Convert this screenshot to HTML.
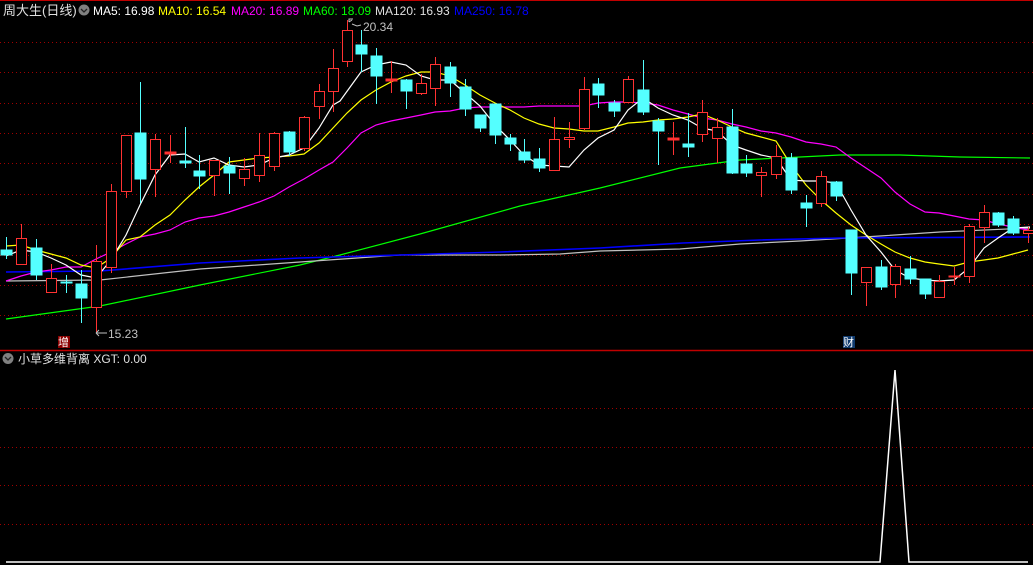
<!DOCTYPE html>
<html><head><meta charset="utf-8">
<style>
html,body{margin:0;padding:0;background:#000;width:1033px;height:565px;overflow:hidden}
svg{display:block}
text{font-family:"Liberation Sans","Noto Sans CJK SC",sans-serif;font-size:12px}
</style></head><body>
<svg width="1033" height="565" viewBox="0 0 1033 565" xmlns="http://www.w3.org/2000/svg">
<rect width="1033" height="565" fill="#000"/>
<line x1="0" y1="0.5" x2="1033" y2="0.5" stroke="#c00000" stroke-width="1"/>
<g stroke="#a00000" stroke-width="1" stroke-dasharray="1,3" shape-rendering="crispEdges">
<line x1="0" x2="1033" y1="42.5" y2="42.5"/><line x1="0" x2="1033" y1="72.5" y2="72.5"/>
<line x1="0" x2="1033" y1="103.5" y2="103.5"/><line x1="0" x2="1033" y1="133.5" y2="133.5"/>
<line x1="0" x2="1033" y1="163.5" y2="163.5"/><line x1="0" x2="1033" y1="194.5" y2="194.5"/>
<line x1="0" x2="1033" y1="224.5" y2="224.5"/><line x1="0" x2="1033" y1="255.5" y2="255.5"/>
<line x1="0" x2="1033" y1="285.5" y2="285.5"/><line x1="0" x2="1033" y1="315.5" y2="315.5"/>
<line x1="0" x2="1033" y1="408.5" y2="408.5"/><line x1="0" x2="1033" y1="447.5" y2="447.5"/>
<line x1="0" x2="1033" y1="485.5" y2="485.5"/><line x1="0" x2="1033" y1="524.5" y2="524.5"/>
</g>
<!-- MA lines -->
<g fill="none" stroke-width="1.2">
<polyline stroke="#00ff00" points="6,319 100,306 200,285 300,265 340,255 420,234 520,206 600,188 680,168 740,160 800,157 840,155 900,155 960,157 1030,158"/>
<polyline stroke="#c0c0c0" points="6,281 100,280 200,269 300,262 400,255 500,255 560,254 600,251 680,249 740,244 800,241 880,236 940,232 1030,228"/>
<polyline stroke="#0000ff" stroke-width="1.6" points="6,272 100,271 200,263 300,258 400,255 500,252 600,248 683,243 760,240 840,238 1030,237"/>
<polyline stroke="#ff00ff" points="6,281 21,276 36,272 51,270 66,267 81,267 96,259 111,252 126,244 140,237 155,234 170,230 185,222 199,218 214,216 229,212 244,207 259,202 274,196 289,187 304,179 319,170 333,162 347,148 361,133 376,125 391,121 406,118 421,115 435,112 450,111 465,108 480,107 495,107 510,107 524,107 539,106 554,106 569,106 584,106 598,103 614,102 628,102 643,103 658,105 673,110 688,114 702,118 717,120 732,124 746,127 761,131 776,133 791,137 806,142 821,144 836,147 851,158 866,168 881,178 895,192 910,204 925,212 939,213 954,216 969,219 984,220 998,224 1013,227 1028,230"/>
<polyline stroke="#ffff00" points="6,246 21,245 36,250 51,254 66,258 81,265 96,268 111,258 126,240 140,237 155,225 170,215 185,200 199,187 214,175 229,162 244,160 259,158 274,157 289,156 304,154 319,143 333,128 347,113 361,100 376,90 391,82 406,76 421,72 435,72 450,76 465,85 480,95 495,103 510,110 524,118 539,124 554,128 569,129 584,131 598,131 614,127 628,123 643,122 658,120 673,119 688,117 702,114 717,120 732,127 746,133 761,137 776,141 791,165 806,185 821,200 836,213 851,225 866,235 881,244 895,252 910,258 925,262 939,264 954,266 969,262 984,260 998,258 1013,254 1028,250"/>
<polyline stroke="#ffffff" points="6,256 21,250 36,252 51,258 66,265 81,275 96,278 111,260 126,235 140,205 155,175 170,155 185,154 199,162 214,158 229,165 244,167 259,165 274,158 289,155 304,148 319,128 333,105 340,101 361,72 376,65 391,62 406,65 421,76 435,80 450,80 465,93 480,106 495,125 510,140 524,155 539,165 554,166 569,167 584,150 598,138 614,130 628,110 643,98 658,108 673,115 688,120 702,128 717,131 732,145 746,150 761,155 776,158 791,180 806,181 821,181 836,183 851,210 866,235 881,252 895,270 910,278 925,280 939,281 954,280 969,268 984,248 998,238 1013,228 1030,227"/>
</g>
<!-- candles: cyan -->
<g stroke="#54ffff" fill="#54ffff" shape-rendering="crispEdges">
<line x1="6.5" x2="6.5" y1="237" y2="259"/><rect x="1" y="250" width="11" height="5"/>
<line x1="36.5" x2="36.5" y1="239" y2="280"/><rect x="31" y="248" width="11" height="27"/>
<line x1="66.5" x2="66.5" y1="275" y2="293"/><rect x="61" y="282" width="11" height="1"/>
<line x1="81.5" x2="81.5" y1="270" y2="323"/><rect x="76" y="284" width="11" height="14"/>
<line x1="140.5" x2="140.5" y1="82" y2="203"/><rect x="135" y="133" width="11" height="46"/>
<line x1="185.5" x2="185.5" y1="127" y2="168"/><rect x="180" y="161" width="11" height="2"/>
<line x1="199.5" x2="199.5" y1="155" y2="189"/><rect x="194" y="171" width="11" height="5"/>
<line x1="229.5" x2="229.5" y1="157" y2="194"/><rect x="224" y="166" width="11" height="7"/>
<line x1="289.5" x2="289.5" y1="131" y2="156"/><rect x="284" y="132" width="11" height="20"/>
<line x1="361.5" x2="361.5" y1="30" y2="72"/><rect x="356" y="45" width="11" height="9"/>
<line x1="376.5" x2="376.5" y1="48" y2="104"/><rect x="371" y="56" width="11" height="20"/>
<line x1="406.5" x2="406.5" y1="79" y2="109"/><rect x="401" y="80" width="11" height="11"/>
<line x1="450.5" x2="450.5" y1="62" y2="97"/><rect x="445" y="67" width="11" height="16"/>
<line x1="465.5" x2="465.5" y1="79" y2="116"/><rect x="460" y="87" width="11" height="22"/>
<line x1="480.5" x2="480.5" y1="115" y2="132"/><rect x="475" y="115" width="11" height="13"/>
<line x1="495.5" x2="495.5" y1="104" y2="144"/><rect x="490" y="104" width="11" height="31"/>
<line x1="510.5" x2="510.5" y1="134" y2="151"/><rect x="505" y="138" width="11" height="6"/>
<line x1="524.5" x2="524.5" y1="139" y2="163"/><rect x="519" y="152" width="11" height="8"/>
<line x1="539.5" x2="539.5" y1="148" y2="172"/><rect x="534" y="159" width="11" height="9"/>
<line x1="598.5" x2="598.5" y1="78" y2="108"/><rect x="593" y="84" width="11" height="11"/>
<line x1="614.5" x2="614.5" y1="100" y2="117"/><rect x="609" y="103" width="11" height="8"/>
<line x1="643.5" x2="643.5" y1="60" y2="115"/><rect x="638" y="90" width="11" height="22"/>
<line x1="658.5" x2="658.5" y1="118" y2="165"/><rect x="653" y="121" width="11" height="10"/>
<line x1="688.5" x2="688.5" y1="113" y2="157"/><rect x="683" y="144" width="11" height="3"/>
<line x1="732.5" x2="732.5" y1="109" y2="174"/><rect x="727" y="127" width="11" height="46"/>
<line x1="746.5" x2="746.5" y1="155" y2="177"/><rect x="741" y="164" width="11" height="9"/>
<line x1="791.5" x2="791.5" y1="153" y2="194"/><rect x="786" y="158" width="11" height="32"/>
<line x1="806.5" x2="806.5" y1="195" y2="227"/><rect x="801" y="203" width="11" height="5"/>
<line x1="836.5" x2="836.5" y1="181" y2="201"/><rect x="831" y="182" width="11" height="14"/>
<line x1="851.5" x2="851.5" y1="230" y2="295"/><rect x="846" y="230" width="11" height="43"/>
<line x1="881.5" x2="881.5" y1="260" y2="290"/><rect x="876" y="267" width="11" height="20"/>
<line x1="910.5" x2="910.5" y1="256" y2="284"/><rect x="905" y="269" width="11" height="10"/>
<line x1="925.5" x2="925.5" y1="279" y2="299"/><rect x="920" y="279" width="11" height="15"/>
<line x1="998.5" x2="998.5" y1="212" y2="227"/><rect x="993" y="213" width="11" height="12"/>
<line x1="1013.5" x2="1013.5" y1="216" y2="235"/><rect x="1008" y="219" width="11" height="14"/>
</g>
<!-- candles: red -->
<g stroke="#ff3232" fill="#000" shape-rendering="crispEdges">
<line x1="21.5" x2="21.5" y1="224" y2="264"/><rect x="16.5" y="238.5" width="10" height="26"/>
<line x1="51.5" x2="51.5" y1="264" y2="292"/><rect x="46.5" y="278.5" width="10" height="14"/>
<line x1="96.5" x2="96.5" y1="245" y2="333"/><rect x="91.5" y="261.5" width="10" height="46"/>
<line x1="111.5" x2="111.5" y1="184" y2="273"/><rect x="106.5" y="191.5" width="10" height="76"/>
<line x1="126.5" x2="126.5" y1="135" y2="198"/><rect x="121.5" y="135.5" width="10" height="56"/>
<line x1="155.5" x2="155.5" y1="134" y2="197"/><rect x="150.5" y="139.5" width="10" height="30"/>
<line x1="170.5" x2="170.5" y1="135" y2="163"/><rect x="165" y="152" width="11" height="2" fill="#ff3232"/>
<line x1="214.5" x2="214.5" y1="160" y2="196"/><rect x="209.5" y="160.5" width="10" height="15"/>
<line x1="244.5" x2="244.5" y1="158" y2="186"/><rect x="239.5" y="169.5" width="10" height="9"/>
<line x1="259.5" x2="259.5" y1="133" y2="182"/><rect x="254.5" y="155.5" width="10" height="20"/>
<line x1="274.5" x2="274.5" y1="132" y2="171"/><rect x="269.5" y="133.5" width="10" height="33"/>
<line x1="304.5" x2="304.5" y1="116" y2="151"/><rect x="299.5" y="117.5" width="10" height="31"/>
<line x1="319.5" x2="319.5" y1="84" y2="119"/><rect x="314.5" y="91.5" width="10" height="15"/>
<line x1="333.5" x2="333.5" y1="49" y2="112"/><rect x="328.5" y="68.5" width="10" height="23"/>
<line x1="347.5" x2="347.5" y1="20" y2="67"/><rect x="342.5" y="30.5" width="10" height="31"/>
<line x1="391.5" x2="391.5" y1="61" y2="93"/><rect x="386" y="79" width="11" height="2" fill="#ff3232"/>
<line x1="421.5" x2="421.5" y1="74" y2="95"/><rect x="416.5" y="83.5" width="10" height="10"/>
<line x1="435.5" x2="435.5" y1="57" y2="106"/><rect x="430.5" y="64.5" width="10" height="24"/>
<line x1="554.5" x2="554.5" y1="117" y2="170"/><rect x="549.5" y="139.5" width="10" height="31"/>
<line x1="569.5" x2="569.5" y1="122" y2="148"/><rect x="564.5" y="137.5" width="10" height="2"/>
<line x1="584.5" x2="584.5" y1="77" y2="130"/><rect x="579.5" y="89.5" width="10" height="39"/>
<line x1="628.5" x2="628.5" y1="76" y2="102"/><rect x="623.5" y="79.5" width="10" height="23"/>
<line x1="673.5" x2="673.5" y1="122" y2="155"/><rect x="668" y="138" width="11" height="2" fill="#ff3232"/>
<line x1="702.5" x2="702.5" y1="100" y2="142"/><rect x="697.5" y="112.5" width="10" height="22"/>
<line x1="717.5" x2="717.5" y1="118" y2="163"/><rect x="712.5" y="127.5" width="10" height="11"/>
<line x1="761.5" x2="761.5" y1="167" y2="197"/><rect x="756.5" y="172.5" width="10" height="3"/>
<line x1="776.5" x2="776.5" y1="145" y2="179"/><rect x="771.5" y="156.5" width="10" height="18"/>
<line x1="821.5" x2="821.5" y1="171" y2="207"/><rect x="816.5" y="176.5" width="10" height="27"/>
<line x1="866.5" x2="866.5" y1="267" y2="306"/><rect x="861.5" y="267.5" width="10" height="15"/>
<line x1="895.5" x2="895.5" y1="264" y2="298"/><rect x="890.5" y="266.5" width="10" height="18"/>
<line x1="939.5" x2="939.5" y1="275" y2="297"/><rect x="934.5" y="281.5" width="10" height="16"/>
<line x1="954.5" x2="954.5" y1="267" y2="285"/><rect x="949" y="276" width="11" height="1" fill="#ff3232"/>
<line x1="969.5" x2="969.5" y1="224" y2="283"/><rect x="964.5" y="226.5" width="10" height="50"/>
<line x1="984.5" x2="984.5" y1="205" y2="243"/><rect x="979.5" y="212.5" width="10" height="15"/>
<line x1="1028.5" x2="1028.5" y1="227" y2="243"/><rect x="1023.5" y="230.5" width="10" height="3"/>
</g>
<!-- price labels -->
<path d="M349 22 L349 19 L353 19 M349 22 L352 20 M352 24 L357 26 L361 25" stroke="#c0c0c0" fill="none"/>
<text x="363" y="31" fill="#c0c0c0">20.34</text>
<path d="M96 333 L107 333 M96 333 L99 330 M96 333 L99 336" stroke="#c0c0c0" fill="none"/>
<text x="108" y="338" fill="#c0c0c0">15.23</text>
<rect x="58" y="336" width="12" height="12" fill="#8b0000"/>
<text x="58" y="346" fill="#fff" style="font-size:11px">增</text>
<rect x="843" y="336" width="12" height="12" fill="#0f3a6e"/>
<text x="843" y="346" fill="#fff" style="font-size:11px">财</text>
<!-- header -->
<text x="3" y="15" fill="#e0e0e0" style="font-size:13px">周大生(日线)</text>
<circle cx="84" cy="10" r="5.5" fill="#808080"/>
<path d="M81 9 L84 12 L87 9" stroke="#222" stroke-width="1.3" fill="none"/>
<text x="93" y="15" fill="#ffffff">MA5: 16.98</text>
<text x="158" y="15" fill="#ffff00">MA10: 16.54</text>
<text x="231" y="15" fill="#ff00ff">MA20: 16.89</text>
<text x="303" y="15" fill="#00ff00">MA60: 18.09</text>
<text x="375" y="15" fill="#e0e0e0">MA120: 16.93</text>
<text x="454" y="15" fill="#0000ff">MA250: 16.78</text>
<!-- separator -->
<line x1="0" y1="350.5" x2="1033" y2="350.5" stroke="#c00000" stroke-width="1.5"/>
<circle cx="8" cy="358.5" r="5.5" fill="#808080"/>
<path d="M5 357 L8 360 L11 357" stroke="#222" stroke-width="1.3" fill="none"/>
<text x="18" y="363" fill="#e0e0e0">小草多维背离 XGT: 0.00</text>
<!-- indicator -->
<polyline fill="none" stroke="#ffffff" stroke-width="1.5" points="6,562 880,562 895,370 909,562 1028,562"/>
</svg>
</body></html>
